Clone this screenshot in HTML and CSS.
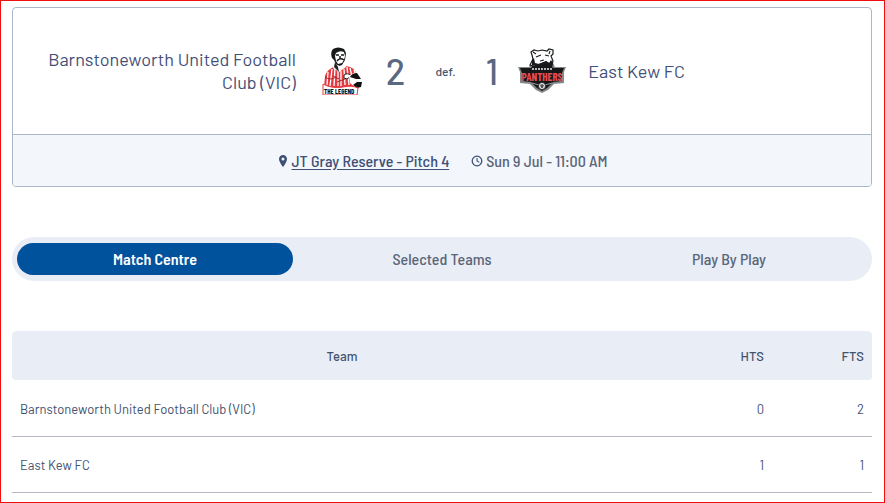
FILE: index.html
```html
<!DOCTYPE html>
<html lang="en">
<head>
    <meta charset="UTF-8">
    <meta name="viewport" content="width=device-width, initial-scale=1">
    <title>Match Centre</title>
    <link rel="stylesheet" href="styles.css">
</head>
<body>

<main class="page">
    <section class="match-card">
        <div class="match-teams">
            <div class="team-name home">Barnstoneworth United Football Club (VIC)</div>
            <div class="scoreboard">
                <svg class="team-logo" viewBox="0 0 48 48" role="img" aria-label="Barnstoneworth United">
                    <path d="M6 40L7 29Q9 22 18 19L28 19Q37 20 39 28L43 34L40 41L6 41Z" fill="#e53b40"/>
                    <path d="M10 25L9 38M14 22L12 39M17 20L16 39M20 22V39M23 24V39M26 22L27 38M29 20L31 38M32 21L35 34M36 23L39 31" stroke="#fff" stroke-width="1.3" fill="none"/>
                    <path d="M17 16L15 21L21 25L28 20L27 14Z" fill="#fff"/>
                    <path d="M17 15L16 20L21 25L20 20Z" fill="#222"/>
                    <path d="M14 11Q12 5 15 2Q20-1 26 2L28 6L27 13L24 18Q21 20 18 17L16 13Z" fill="#17191b"/>
                    <path d="M18 6Q22 3 26 5L27 9L26 13L24 16L20 17L18 14L17 9Z" fill="#fff"/>
                    <path d="M18 8L21 8M23 8L26 8M22 9L22 12M19 14Q22 10 26 13" stroke="#17191b" stroke-width="1.500" fill="none"/>
                    <path d="M7 30Q13 34 18 30M15 29L21 32M19 35L27 32" stroke="#a52229" stroke-width="1" fill="none"/>
                    <path d="M26 28Q30 25 33 29L29 32L26 31Z" fill="#fff" stroke="#222" stroke-width="1"/>
                    <path d="M31 29L37 25L43 32L44 38L38 41L32 36Z" fill="#fff"/>
                    <path d="M32 30Q34 26 39 26L43 32L38 32ZM35 38L39 35L44 35L43 40L39 41Z" fill="#111"/>
                    <path d="M5 37Q14 42 25 40Q34 38 40 41L39 48H5Z" fill="#fff" stroke="#e53b40" stroke-width="1"/>
                    <text x="6" y="47" class="logo-legend">THE LEGEND</text>
                </svg>
                <span class="score">2</span>
                <span class="result">def.</span>
                <span class="score">1</span>
                <svg class="team-logo" viewBox="0 0 48 48" role="img" aria-label="East Kew Panthers">
                    <path d="M0 20L11 20L14 14L34 14L37 20L48 20L46 25V36L36 37L30 43L24 46L18 43L12 37L2 36V25Z" fill="#85888a"/>
                    <path d="M2 21L13 21L16 16H32L35 21L46 21L44 26V34L35 35L29 41L24 44L19 41L13 35L4 34V26Z" fill="#151719"/>
                    <path d="M12 18L15 12L14 8L13 5L16 3L20 4L24 3L29 4L31 2L35 3V7L33 9L35 14L34 18L28 15L22 17L16 19Z" fill="#fff" stroke="#191c1e" stroke-width="1.200"/>
                    <path d="M15 5L18 7M32 4L31 7M18 10L23 8M27 8L31 9M22 14L26 13" stroke="#191c1e" stroke-width="1.100" fill="none"/>
                    <path d="M14 13L16 11L17 16L21 17L28 14L31 16L33 13L35 16L34 20L28 17L21 19L14 18Z" fill="#191c1e"/>
                    <path d="M14 22H35" stroke="#b6b8b9" stroke-width="2" stroke-dasharray="2 1"/>
                    <text x="24" y="34" class="logo-panthers" text-anchor="middle">PANTHERS</text>
                    <path d="M14 36L21 38M27 38L34 36" stroke="#999" stroke-width="1"/>
                    <circle cx="24" cy="39" r="3.5" fill="#fff" stroke="#27292b" stroke-width="1"/>
                    <path d="M24 37L26 38L25 41H23L22 38Z" fill="#555"/>
                </svg>
            </div>
            <div class="team-name">East Kew FC</div>
        </div>
        <div class="match-info">
            <div class="info-item">
                <svg class="info-icon" viewBox="0 0 12 12" aria-hidden="true">
                    <path fill-rule="evenodd" d="M6 0C3.700 0 2 1.700 2 4C2 7 6 12 6 12S10 7 10 4C10 1.700 8.300 0 6 0ZM6 2.500A1.500 1.500 0 1 1 6 5.500A1.500 1.500 0 0 1 6 2.500Z" fill="#3c4f74"/>
                </svg>
                <a href="#">JT Gray Reserve - Pitch 4</a>
            </div>
            <div class="info-item">
                <svg class="info-icon" viewBox="0 0 12 12" aria-hidden="true">
                    <circle cx="6" cy="6" r="4.800" fill="none" stroke="#3c5076" stroke-width="1.300"/>
                    <path d="M6 3V6L8.300 7.400" fill="none" stroke="#3c5076" stroke-width="1.100"/>
                </svg>
                <span>Sun 9 Jul - 11:00 AM</span>
            </div>
        </div>
    </section>

    <nav class="tabs">
        <button type="button" class="tab active">Match Centre</button>
        <button type="button" class="tab">Selected Teams</button>
        <button type="button" class="tab">Play By Play</button>
    </nav>

    <table class="scores">
        <thead>
            <tr>
                <th class="team-col" scope="col">Team</th>
                <th class="score-col" scope="col">HTS</th>
                <th class="score-col" scope="col">FTS</th>
            </tr>
        </thead>
        <tbody>
            <tr>
                <td>Barnstoneworth United Football Club (VIC)</td>
                <td class="score-col">0</td>
                <td class="score-col">2</td>
            </tr>
            <tr>
                <td>East Kew FC</td>
                <td class="score-col">1</td>
                <td class="score-col">1</td>
            </tr>
        </tbody>
    </table>
</main>

</body>
</html>
```
FILE: styles.css
```css
* {
    box-sizing: border-box;
}
body {
    margin: 0;
    font-family: Barlow, Roboto, sans-serif;
    color: #42526f;
    background: white;
}
.page {
    min-height: 100vh;
    padding: 6px 12px 8px 11px;
    border: 1px solid #f00f0f;
}
.match-card {
    border: 1px solid #abb7c7;
    border-radius: 4px;
    overflow: hidden;
}
.match-teams {
    display: grid;
    grid-template-columns: 1fr auto 1fr;
    align-items: center;
    gap: 22px;
    min-height: 126px;
}
.team-name {
    font-size: 18px;
    line-height: 23px;
    color: #435076;
}
.team-name.home {
    padding-left: 24px;
    text-align: right;
}
.scoreboard {
    display: flex;
    align-items: center;
    justify-content: space-between;
    gap: 20px;
}
.team-logo {
    width: 48px;
    height: 48px;
    flex: none;
}
.logo-legend {
    font: bold 7px "Liberation Sans Narrow", "Barlow Condensed", sans-serif;
    fill: #111;
}
.logo-panthers {
    font: bold 11px "Liberation Sans Narrow", "Barlow Condensed", "Liberation Serif", serif;
    fill: #e74c50;
}
.score {
    color: #5a6880;
    font-size: 36px;
    font-weight: 500;
    line-height: 40px;
}
.result {
    padding: 0 10px;
    font-size: 12px;
    font-weight: 500;
    line-height: 16px;
}
.match-info {
    display: flex;
    flex-wrap: wrap;
    align-items: center;
    justify-content: center;
    gap: 22px;
    min-height: 52px;
    border-top: 1px solid #abb7c7;
    background: #f3f6fb;
    font-family: "Barlow Semi Condensed", Barlow, Roboto, sans-serif;
    font-size: 16px;
    font-weight: 500;
    line-height: 18px;
}
.info-item {
    display: flex;
    align-items: center;
    gap: 3px;
    color: #5b6679;
}
.info-item a {
    color: #3f5075;
    text-underline-offset: 2px;
}
.info-icon {
    width: 12px;
    height: 12px;
}
.tabs {
    display: grid;
    grid-template-columns: repeat(3, 1fr);
    gap: 11px;
    margin: 50px 0;
    padding: 6px 5px;
    border-radius: 22px;
    background: #e9eef6;
}
.tab {
    height: 32px;
    padding: 0 0 2px;
    border: none;
    border-radius: 16px;
    background: none;
    color: #5b6679;
    font-family: "Barlow Semi Condensed", Barlow, Roboto, sans-serif;
    font-size: 16px;
    font-weight: 500;
    cursor: pointer;
}
.tab.active {
    background: #00529d;
    color: white;
    font-weight: 600;
}
.scores {
    width: 100%;
    border-collapse: separate;
    border-spacing: 0;
    table-layout: fixed;
    font-size: 13px;
}
.scores th {
    height: 50px;
    padding: 0 8px;
    border-bottom: 1px solid transparent;
    background: #e9eef6;
    background-clip: padding-box;
    font-weight: 500;
}
.scores th:first-child {
    border-radius: 4px 0 0 4px;
}
.scores th:last-child {
    border-radius: 0 4px 4px 0;
}
.scores td {
    height: 56px;
    padding: 0 8px;
    border-bottom: 1px solid #b5b9bf;
}
.scores .score-col {
    width: 100px;
    text-align: right;
}
```
